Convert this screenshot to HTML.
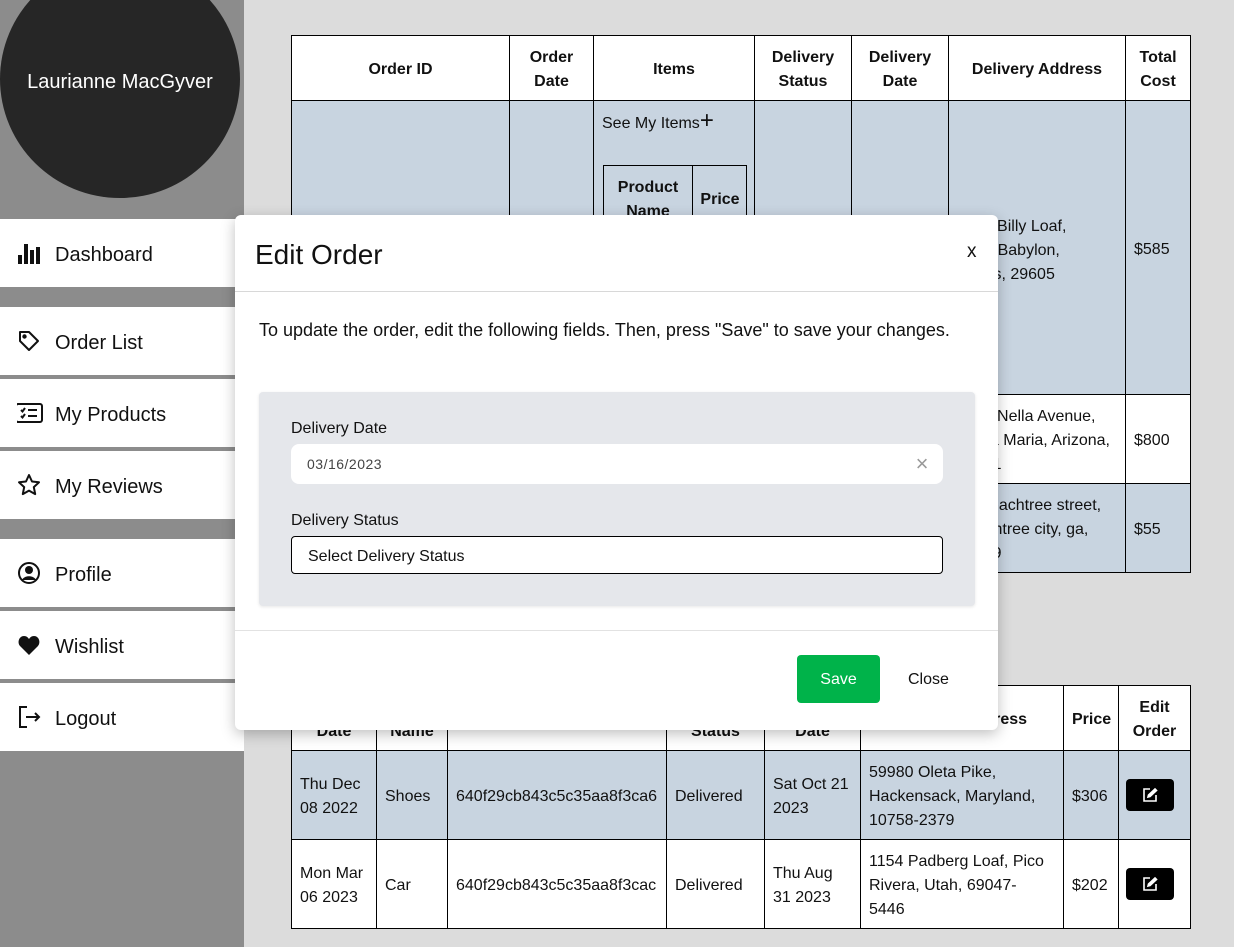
<!DOCTYPE html>
<html><head><meta charset="utf-8"><style>
*{box-sizing:border-box;margin:0;padding:0}
body{width:1234px;height:947px;overflow:hidden;background:#dcdcdc;font-family:"Liberation Sans",sans-serif;color:#111;position:relative}
.side{position:absolute;left:0;top:0;width:244px;height:947px;background:#8c8c8c}
.circle{position:absolute;left:0;top:-40px;width:240px;height:238px;border-radius:50%;background:#262626;color:#fff;font-size:20px;text-align:center;padding-top:42px;line-height:160px}
.nav{position:absolute;left:0;width:244px;height:68px;background:#fff;font-size:20px}
.nav svg{position:absolute;left:17px;top:22px}
.nav span{position:absolute;left:55px;top:25px}
table{position:absolute;border-collapse:collapse;table-layout:fixed;font-size:16px}
td,th{border:1px solid #000;padding:4px 8px 0;vertical-align:middle;line-height:24px}
th{background:#fff;font-weight:bold;text-align:center}
.b{background:#c8d4e0}.w{background:#fff}
.btn{display:inline-block;width:48px;height:32px;background:#000;border-radius:4px;position:relative;margin-left:-1px;top:2px}
.modal{position:absolute;left:235px;top:215px;width:763px;height:515px;background:#fff;border-radius:6px;box-shadow:0 4px 14px rgba(0,0,0,.25)}
</style></head><body>
<div class="side">
<div class="circle">Laurianne MacGyver</div>
<div class="nav" style="top:219px"><svg width="24" height="24" viewBox="0 0 24 24"><rect x="1" y="14" width="4" height="9" fill="#111"/><rect x="7" y="3" width="4" height="20" fill="#111"/><rect x="13" y="9" width="4" height="14" fill="#111"/><rect x="19" y="6" width="4" height="17" fill="#111"/></svg><span>Dashboard</span></div>
<div class="nav" style="top:307px"><svg width="24" height="24" viewBox="0 0 24 24" fill="none" stroke="#111" stroke-width="2"><path d="M3 3h9l9 9-9 9-9-9z" stroke-linejoin="round"/><circle cx="7.5" cy="7.5" r="1.2" fill="#111"/></svg><span>Order List</span></div>
<div class="nav" style="top:379px"><svg width="28" height="24" viewBox="0 0 28 24" fill="none" stroke="#111" stroke-width="2"><rect x="-1" y="3" width="26" height="18" rx="2"/><path d="M4 9l1.5 1.5L8 7M4 15l1.5 1.5L8 13M11 9h9M11 15h9"/></svg><span>My Products</span></div>
<div class="nav" style="top:451px"><svg width="24" height="24" viewBox="0 0 24 24" fill="none" stroke="#111" stroke-width="2"><path d="M12 2l3 6.5 7 .8-5.2 4.8 1.4 7L12 17.6 5.8 21.1l1.4-7L2 9.3l7-.8z" stroke-linejoin="round"/></svg><span>My Reviews</span></div>
<div class="nav" style="top:539px"><svg width="24" height="24" viewBox="0 0 24 24"><circle cx="12" cy="12" r="10" fill="none" stroke="#111" stroke-width="2"/><circle cx="12" cy="9" r="4" fill="#111"/><path d="M5 19c2-5 12-5 14 0" fill="#111"/></svg><span>Profile</span></div>
<div class="nav" style="top:611px"><svg width="24" height="24" viewBox="0 0 24 24"><path d="M12 22L3 13C0 9.5 2 3 7 3c2.5 0 4 1.5 5 3 1-1.5 2.5-3 5-3 5 0 7 6.5 4 10z" fill="#111"/></svg><span>Wishlist</span></div>
<div class="nav" style="top:683px"><svg width="24" height="24" viewBox="0 0 24 24" fill="none" stroke="#111" stroke-width="2"><path d="M10 2H3v20h7M9 12h13M18 8l4 4-4 4"/></svg><span>Logout</span></div>
</div>

<table style="left:291px;top:35px;width:899px">
<colgroup><col style="width:218px"><col style="width:84px"><col style="width:161px"><col style="width:97px"><col style="width:97px"><col style="width:177px"><col style="width:65px"></colgroup>
<tr style="height:65px"><th>Order ID</th><th>Order Date</th><th>Items</th><th>Delivery Status</th><th>Delivery Date</th><th>Delivery Address</th><th>Total Cost</th></tr>
<tr class="b" style="height:294px"><td></td><td></td><td style="vertical-align:top;padding-top:10px;position:relative">See My Items<span style="font-size:24px;line-height:20px">+</span>
<div style="position:absolute;left:9px;top:64px;width:144px;height:80px;border:1px solid #000;border-bottom:none"><div style="position:absolute;left:88px;top:0;bottom:0;border-left:1px solid #000"></div><div style="position:absolute;left:0;width:88px;top:10px;text-align:center;font-weight:bold">Product Name</div><div style="position:absolute;left:88px;width:56px;top:22px;text-align:center;font-weight:bold">Price</div></div></td><td></td><td></td><td style="vertical-align:top;padding-top:114px">5716 Billy Loaf,<br>West Babylon,<br>Illinois, 29605</td><td>$585</td></tr>
<tr class="w" style="height:89px"><td></td><td></td><td></td><td></td><td></td><td>3321 Nella Avenue,<br>Santa Maria, Arizona,<br>85001</td><td>$800</td></tr>
<tr class="b" style="height:89px"><td></td><td></td><td></td><td></td><td></td><td>12 Peachtree street,<br>Peachtree city, ga,<br>30269</td><td>$55</td></tr>
</table>

<table style="left:291px;top:685px;width:899px">
<colgroup><col style="width:85px"><col style="width:71px"><col style="width:219px"><col style="width:98px"><col style="width:96px"><col style="width:203px"><col style="width:55px"><col style="width:72px"></colgroup>
<tr style="height:65px"><th>Order Date</th><th>Product Name</th><th>Product ID</th><th>Delivery Status</th><th>Delivery Date</th><th>Delivery Address</th><th>Price</th><th>Edit Order</th></tr>
<tr class="b" style="height:89px"><td>Thu Dec 08 2022</td><td>Shoes</td><td>640f29cb843c5c35aa8f3ca6</td><td>Delivered</td><td>Sat Oct 21 2023</td><td>59980 Oleta Pike,<br>Hackensack, Maryland,<br>10758-2379</td><td>$306</td><td><span class="btn"><svg style="position:absolute;left:16px;top:8px" width="16" height="16" viewBox="0 0 16 16" fill="none" stroke="#fff" stroke-width="1.6"><path d="M8 2H2v12h12V8"/><path d="M13 2l1.5 1.5L8 9.5 6 10l.5-2z" fill="#fff"/></svg></span></td></tr>
<tr class="w" style="height:89px"><td>Mon Mar 06 2023</td><td>Car</td><td>640f29cb843c5c35aa8f3cac</td><td>Delivered</td><td>Thu Aug 31 2023</td><td>1154 Padberg Loaf, Pico<br>Rivera, Utah, 69047-<br>5446</td><td>$202</td><td><span class="btn"><svg style="position:absolute;left:16px;top:8px" width="16" height="16" viewBox="0 0 16 16" fill="none" stroke="#fff" stroke-width="1.6"><path d="M8 2H2v12h12V8"/><path d="M13 2l1.5 1.5L8 9.5 6 10l.5-2z" fill="#fff"/></svg></span></td></tr>
</table>

<div class="modal">
<div style="position:absolute;left:20px;top:24px;font-size:28px">Edit Order</div>
<div style="position:absolute;left:732px;top:26px;font-size:19px">x</div>
<div style="position:absolute;left:0;right:0;top:76px;border-top:1px solid #d8d8d8"></div>
<div style="position:absolute;left:24px;top:105px;font-size:18px">To update the order, edit the following fields. Then, press "Save" to save your changes.</div>
<div style="position:absolute;left:24px;top:177px;width:716px;height:214px;background:#e5e7eb;border-radius:4px;box-shadow:0 1px 3px rgba(0,0,0,.1)">
<div style="position:absolute;left:32px;top:28px;font-size:16px">Delivery Date</div>
<div style="position:absolute;left:32px;top:52px;width:652px;height:40px;background:#fff;border-radius:8px;font-size:14px;color:#444;padding:12px 16px;letter-spacing:.5px">03/16/2023<span style="position:absolute;right:14px;top:7px;font-size:22px;color:#999">×</span></div>
<div style="position:absolute;left:32px;top:120px;font-size:16px">Delivery Status</div>
<div style="position:absolute;left:32px;top:144px;width:652px;height:38px;background:#fff;border:1px solid #000;border-radius:4px;font-size:16px;padding:11px 16px 0">Select Delivery Status</div>
</div>
<div style="position:absolute;left:0;right:0;top:415px;border-top:1px solid #e2e2e2"></div>
<div style="position:absolute;left:562px;top:440px;width:83px;height:48px;background:#00b34a;border-radius:4px;color:#fff;font-size:16px;text-align:center;line-height:50px">Save</div>
<div style="position:absolute;left:673px;top:441px;font-size:16px;line-height:48px">Close</div>
</div>
</body></html>
